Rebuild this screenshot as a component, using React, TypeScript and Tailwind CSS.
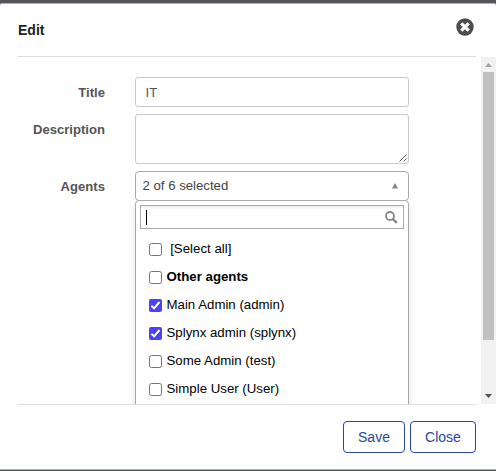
import React from "react";

const agents = [
  { label: "[Select all]", checked: false, bold: false, indent: true },
  { label: "Other agents", checked: false, bold: true, indent: false },
  { label: "Main Admin (admin)", checked: true, bold: false, indent: false },
  { label: "Splynx admin (splynx)", checked: true, bold: false, indent: false },
  { label: "Some Admin (test)", checked: false, bold: false, indent: false },
  { label: "Simple User (User)", checked: false, bold: false, indent: false },
];

function Checkbox({ checked }: { checked: boolean }) {
  return checked ? (
    <span className="mt-px flex size-[13px] shrink-0 rounded-[2px] bg-[#4b40fb]">
      <svg viewBox="0 0 13 13" className="size-[13px]" fill="none" stroke="#fff" strokeWidth="2">
        <path d="M2.4 6.8 5.1 9.4 10.5 3" />
      </svg>
    </span>
  ) : (
    <span className="mt-px size-[13px] shrink-0 rounded-[2.5px] border border-[#767676] bg-white" />
  );
}

function Row({ label, children }: { label: string; children: React.ReactNode }) {
  return (
    <div className="flex">
      <div className="w-[105px] shrink-0 pt-2 text-right text-[13.1px] leading-[15px] font-bold text-[#555]">
        {label}
      </div>
      <div className="ml-[30px] w-[274px]">{children}</div>
    </div>
  );
}

export default function App() {
  return (
    <div className="flex h-[471px] w-[496px] flex-col overflow-hidden bg-[#55565c] pt-[3px] font-['Liberation_Sans',Arial,sans-serif]">
      <div className="flex h-[467px] flex-col rounded-t-[2px] border-y border-[#b3b4b7] bg-white">
        <header className="ml-[18px] flex h-[53px] w-[458px] shrink-0 items-start justify-between border-b border-[#dedede]">
          <h1 className="mt-[18px] text-[14px] leading-4 font-bold text-[#222]">Edit</h1>
          <svg viewBox="0 0 18 18" className="mt-[14px] mr-[2px] size-[18px]">
            <circle cx="9" cy="9" r="8.7" fill="#4d4d4d" />
            <path d="M5.3 5.3 12.7 12.7M12.7 5.3 5.3 12.7" stroke="#fff" strokeWidth="3.3" />
          </svg>
        </header>

        <div className="flex h-[347px] shrink-0 overflow-hidden">
          <main className="flex h-[347px] w-[481px] flex-col gap-[7px] overflow-hidden pt-5">
            <Row label="Title">
              <div className="h-[30px] rounded-[3px] border border-[#c8c8c8] pl-[9.5px] text-[13.2px] leading-[29px] text-[#555]">IT</div>
            </Row>
            <Row label="Description">
              <div className="flex h-[50px] items-end justify-end rounded-[3px] border border-[#c8c8c8] p-px">
                <svg viewBox="0 0 8 8" className="size-2" stroke="#444" strokeWidth="0.9">
                  <path d="M0.5 7.5 7.5 0.5M4.5 7.5 7.5 4.5" />
                </svg>
              </div>
            </Row>
            <Row label="Agents">
              <div className="flex h-[30px] items-center justify-between rounded-[4px] border border-[#aaa] pr-[10px] pl-[6.5px] text-[13.2px] leading-[28px] text-[#444]">
                <span>2 of 6 selected</span>
                <svg viewBox="0 0 6 6" className="mb-px size-[6px]" fill="#888">
                  <path d="M2.5 0.5H3.5L6 5.5H0Z" />
                </svg>
              </div>
              <div className="-mt-px h-[230px] rounded-t-[4px] border border-[#aaa] px-1 pt-1 shadow-[0_4px_5px_rgba(0,0,0,0.15)]">
                <div className="flex h-6 items-center justify-between border border-[#aaa] bg-linear-to-b from-[#eee] from-1% to-white to-15% pr-[5px] pl-[5px]">
                  <span className="h-[15px] w-px bg-black" />
                  <svg viewBox="0 0 13 13" className="mt-px size-[13px]" fill="none" stroke="#888">
                    <circle cx="5" cy="5" r="4" strokeWidth="1.8" />
                    <path d="m7.8 7.8 4 4" strokeWidth="2.4" />
                  </svg>
                </div>
                <ul className="pt-[6px] pl-[9px] text-[13.25px] text-black">
                  {agents.map((agent) => (
                    <li key={agent.label} className="flex h-7 items-center">
                      <Checkbox checked={agent.checked} />
                      <span className={`${agent.indent ? "ml-[8.2px]" : "ml-[4.5px]"} ${agent.bold ? "font-bold" : ""} leading-4 whitespace-nowrap`}>
                        {agent.label}
                      </span>
                    </li>
                  ))}
                </ul>
              </div>
            </Row>
          </main>
          <div className="flex w-[15px] shrink-0 flex-col items-center bg-[#f1f1f1]">
            <svg viewBox="0 0 15 15" className="size-[15px] shrink-0" fill="#a3a3a3">
              <path d="M4 10 7.5 6 11 10Z" />
            </svg>
            <div className="h-[268px] w-[11px] bg-[#c1c1c1]" />
            <svg viewBox="0 0 15 15" className="mt-auto size-[15px] shrink-0" fill="#505050">
              <path d="M4 5 7.5 9 11 5Z" />
            </svg>
          </div>
        </div>

        <footer className="ml-[18px] flex w-[458px] grow justify-end gap-[5px] border-t border-[#dedede] pt-4">
          <button className="h-8 w-[62px] rounded-[4px] border border-[#2747a0] text-[14px] leading-[30px] text-[#2747a0]">Save</button>
          <button className="h-8 w-[66px] rounded-[4px] border border-[#2747a0] text-[14px] leading-[30px] text-[#2747a0]">Close</button>
        </footer>
      </div>
    </div>
  );
}
